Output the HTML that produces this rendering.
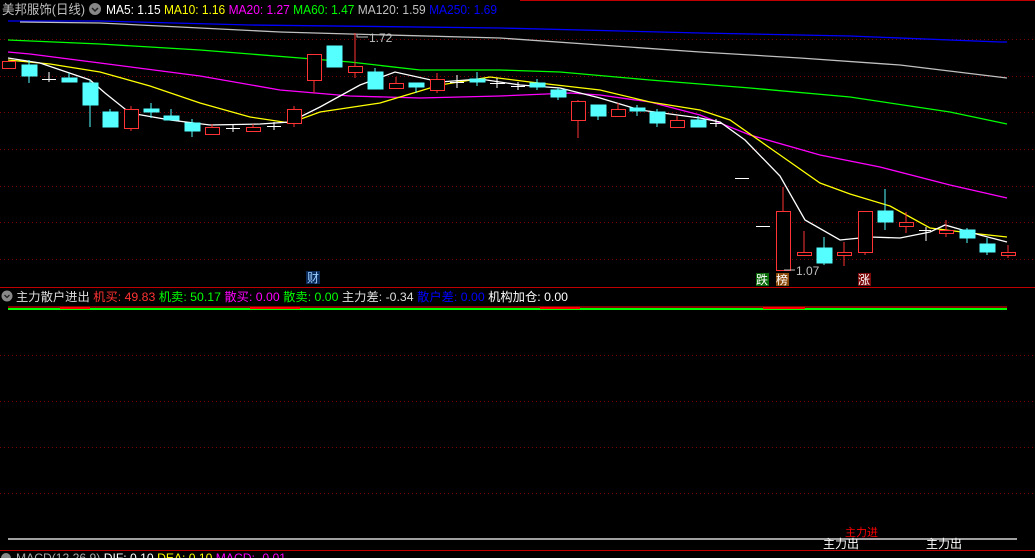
<!DOCTYPE html>
<html><head><meta charset="utf-8"><style>
html,body{margin:0;padding:0;background:#000;width:1035px;height:558px;overflow:hidden}
svg{display:block}
text{font-family:"Liberation Sans","Noto Sans CJK SC",sans-serif}
</style></head><body>
<svg width="1035" height="558" viewBox="0 0 1035 558">
<rect width="1035" height="558" fill="#000"/>
<line x1="520" y1="0.5" x2="1035" y2="0.5" stroke="#c00000"/>
<g stroke="#800000" stroke-dasharray="1,3">
<line x1="0" y1="39.5" x2="1035" y2="39.5"/><line x1="0" y1="76.5" x2="1035" y2="76.5"/>
<line x1="0" y1="112.5" x2="1035" y2="112.5"/><line x1="0" y1="149.5" x2="1035" y2="149.5"/>
<line x1="0" y1="186.5" x2="1035" y2="186.5"/><line x1="0" y1="222.5" x2="1035" y2="222.5"/>
<line x1="0" y1="259.5" x2="1035" y2="259.5"/>
<line x1="0" y1="355.5" x2="1035" y2="355.5"/><line x1="0" y1="401.5" x2="1035" y2="401.5"/>
<line x1="0" y1="447.5" x2="1035" y2="447.5"/><line x1="0" y1="493.5" x2="1035" y2="493.5"/>
</g>
<g fill="none" stroke-width="1.3">
<polyline stroke="#0000ff" points="8,21 100,21 250,25 500,28 700,33 850,36 1000,42 1007,42"/>
<polyline stroke="#c0c0c0" points="20,22 100,23 200,28 280,32 350,34 500,38 600,45 700,52 800,58 900,65 1007,78"/>
<polyline stroke="#00ff00" points="8,40 100,44 200,50 300,58 350,62 420,70 500,70 560,72 650,80 750,88 850,97 950,112 1007,124"/>
<polyline stroke="#ff00ff" points="8,52 30,54 100,63 200,76 280,90 350,96 420,98 500,96 570,93 600,95 650,102 700,115 750,135 820,155 880,167 950,185 1007,198"/>
<polyline stroke="#ffff00" points="8,60 50,64 100,72 150,86 200,103 250,117 290,123 320,112 380,103 440,85 490,77 530,82 600,90 650,102 700,110 730,120 780,155 820,183 850,194 890,206 930,228 970,233 1007,237"/>
<polyline stroke="#ffffff" points="8,58 40,63 90,80 105,93 130,113 170,120 210,125 260,124 290,122 320,107 360,85 395,72 440,82 480,79 520,85 560,88 600,98 640,110 700,118 720,122 745,140 780,176 805,220 840,240 870,237 900,238 930,232 945,225 980,235 1007,242"/>
</g>
<g stroke="#ff3333" fill="#000" stroke-width="1">
<rect x="2.5" y="61.5" width="13" height="7"/>
<line x1="131" y1="106" x2="131" y2="131"/><rect x="124.5" y="109.5" width="14" height="19"/>
<line x1="212" y1="124" x2="212" y2="127"/><rect x="205.5" y="127.5" width="14" height="7"/>
<line x1="253" y1="124" x2="253" y2="127"/><rect x="246.5" y="127.5" width="14" height="4"/>
<line x1="294" y1="106" x2="294" y2="127"/><rect x="287.5" y="109.5" width="14" height="14"/>
<line x1="314" y1="80" x2="314" y2="93"/><rect x="307.5" y="54.5" width="14" height="26"/>
<line x1="355" y1="33" x2="355" y2="78"/><rect x="348.5" y="66.5" width="14" height="6"/>
<line x1="396" y1="77" x2="396" y2="89"/><rect x="389.5" y="83.5" width="14" height="5"/>
<line x1="437" y1="73" x2="437" y2="93"/><rect x="430.5" y="79.5" width="14" height="11"/>
<line x1="578" y1="100" x2="578" y2="138"/><rect x="571.5" y="101.5" width="14" height="19"/>
<line x1="618" y1="103" x2="618" y2="109"/><rect x="611.5" y="109.5" width="14" height="7"/>
<line x1="677" y1="116" x2="677" y2="120"/><rect x="670.5" y="120.5" width="14" height="7"/>
<line x1="783" y1="187" x2="783" y2="211"/><rect x="776.5" y="211.5" width="14" height="59"/>
<line x1="804" y1="231" x2="804" y2="252"/><rect x="797.5" y="252.5" width="14" height="3"/>
<line x1="844" y1="242" x2="844" y2="266"/><rect x="837.5" y="252.5" width="14" height="3"/>
<line x1="865" y1="252" x2="865" y2="255"/><rect x="858.5" y="211.5" width="14" height="41"/>
<line x1="906" y1="212" x2="906" y2="233"/><rect x="899.5" y="222.5" width="14" height="4"/>
<line x1="946" y1="220" x2="946" y2="237"/><rect x="939.5" y="230.5" width="14" height="3"/>
<line x1="1008" y1="245" x2="1008" y2="258"/><rect x="1001.5" y="252.5" width="14" height="3"/>
</g>
<g stroke="#55ffff" fill="#55ffff">
<line x1="29" y1="60" x2="29" y2="83"/><rect x="22" y="65" width="15" height="11"/>
<line x1="69" y1="73" x2="69" y2="82"/><rect x="62" y="78" width="15" height="4"/>
<line x1="90" y1="80" x2="90" y2="127"/><rect x="83" y="83" width="15" height="22"/>
<line x1="110" y1="109" x2="110" y2="127"/><rect x="103" y="112" width="15" height="15"/>
<line x1="151" y1="103" x2="151" y2="118"/><rect x="144" y="109" width="15" height="3"/>
<line x1="171" y1="109" x2="171" y2="120"/><rect x="164" y="116" width="15" height="4"/>
<line x1="192" y1="119" x2="192" y2="137"/><rect x="185" y="123" width="15" height="8"/>
<rect x="327" y="46" width="15" height="21"/>
<line x1="375" y1="68" x2="375" y2="89"/><rect x="368" y="72" width="15" height="17"/>
<line x1="416" y1="83" x2="416" y2="93"/><rect x="409" y="83" width="15" height="4"/>
<line x1="477" y1="72" x2="477" y2="86"/><rect x="470" y="79" width="15" height="3"/>
<line x1="537" y1="79" x2="537" y2="90"/><rect x="530" y="83" width="15" height="4"/>
<line x1="558" y1="88" x2="558" y2="100"/><rect x="551" y="90" width="15" height="7"/>
<line x1="598" y1="105" x2="598" y2="120"/><rect x="591" y="105" width="15" height="11"/>
<line x1="637" y1="105" x2="637" y2="116"/><rect x="630" y="108" width="15" height="3"/>
<line x1="657" y1="109" x2="657" y2="127"/><rect x="650" y="112" width="15" height="11"/>
<line x1="698" y1="116" x2="698" y2="127"/><rect x="691" y="120" width="15" height="7"/>
<line x1="824" y1="237" x2="824" y2="265"/><rect x="817" y="248" width="15" height="15"/>
<line x1="885" y1="189" x2="885" y2="230"/><rect x="878" y="211" width="15" height="11"/>
<line x1="967" y1="228" x2="967" y2="243"/><rect x="960" y="230" width="15" height="8"/>
<line x1="987" y1="238" x2="987" y2="255"/><rect x="980" y="244" width="15" height="8"/>
</g>
<g stroke="#fff">
<line x1="42" y1="79.5" x2="56" y2="79.5"/><line x1="49" y1="72" x2="49" y2="82"/>
<line x1="226" y1="128.5" x2="240" y2="128.5"/><line x1="233" y1="124" x2="233" y2="132"/>
<line x1="267" y1="126.5" x2="281" y2="126.5"/><line x1="274" y1="122" x2="274" y2="130"/>
<line x1="450" y1="82.5" x2="464" y2="82.5"/><line x1="457" y1="75" x2="457" y2="88"/>
<line x1="490" y1="83.5" x2="505" y2="83.5"/><line x1="497" y1="78" x2="497" y2="88"/>
<line x1="511" y1="86.5" x2="525" y2="86.5"/><line x1="518" y1="82" x2="518" y2="90"/>
<line x1="710" y1="123.5" x2="722" y2="123.5"/><line x1="716" y1="119" x2="716" y2="127"/>
<line x1="735" y1="178.5" x2="749" y2="178.5"/>
<line x1="756" y1="226.5" x2="770" y2="226.5"/>
<line x1="919" y1="230.5" x2="931" y2="230.5"/><line x1="926" y1="227" x2="926" y2="241"/>
</g>
<g stroke="#c0c0c0"><polyline fill="none" points="357,35 357,37 368,37"/><polyline fill="none" points="784,270 784,270 795,270"/></g>
<text x="369" y="42" fill="#c0c0c0" font-size="12">1.72</text>
<text x="796" y="275" fill="#c0c0c0" font-size="12">1.07</text>
<rect x="306" y="271" width="14" height="13" fill="#0a2a5a"/><text x="307" y="282" fill="#9cf" font-size="12">财</text>
<rect x="756" y="273" width="13" height="13" fill="#0a6a0a"/><text x="756" y="284" fill="#fff" font-size="12">跌</text>
<rect x="776" y="273" width="13" height="13" fill="#8a4a0a"/><text x="776" y="284" fill="#fff" font-size="12">榜</text>
<rect x="858" y="273" width="13" height="13" fill="#7a0a0a"/><text x="858" y="284" fill="#fff" font-size="12">涨</text>
<text x="2" y="14" fill="#c0c0c0" font-size="13" textLength="83" lengthAdjust="spacingAndGlyphs">美邦服饰(日线)</text>
<circle cx="95" cy="9" r="6" fill="#888"/><path d="M92 8 l3 3 l3 -3" stroke="#222" stroke-width="1.5" fill="none"/>
<text x="106" y="14" font-size="13" textLength="391" lengthAdjust="spacingAndGlyphs"><tspan fill="#fff">MA5: 1.15</tspan> <tspan fill="#ff0">MA10: 1.16</tspan> <tspan fill="#f0f">MA20: 1.27</tspan> <tspan fill="#0f0">MA60: 1.47</tspan> <tspan fill="#c0c0c0">MA120: 1.59</tspan> <tspan fill="#00f">MA250: 1.69</tspan></text>
<line x1="0" y1="287.5" x2="1035" y2="287.5" stroke="#c00000"/>
<circle cx="7" cy="296" r="5.5" fill="#888"/><path d="M4.5 295 l2.5 2.5 l2.5 -2.5" stroke="#222" stroke-width="1.3" fill="none"/>
<text x="16" y="301" font-size="12" textLength="552" lengthAdjust="spacingAndGlyphs"><tspan fill="#ddd">主力散户进出</tspan> <tspan fill="#f33">机买: 49.83</tspan> <tspan fill="#0f0">机卖: 50.17</tspan> <tspan fill="#f0f">散买: 0.00</tspan> <tspan fill="#0f0">散卖: 0.00</tspan> <tspan fill="#ddd">主力差: -0.34</tspan> <tspan fill="#00f">散户差: 0.00</tspan> <tspan fill="#fff">机构加仓: 0.00</tspan></text>
<line x1="8" y1="307" x2="1007" y2="307" stroke="#f00"/>
<line x1="8" y1="309" x2="1007" y2="309" stroke="#0f0" stroke-width="2"/>
<g stroke="#f00" stroke-width="2"><line x1="60" y1="308" x2="90" y2="308"/><line x1="250" y1="308" x2="300" y2="308"/><line x1="763" y1="308" x2="805" y2="308"/><line x1="540" y1="308" x2="580" y2="308"/></g>
<line x1="8" y1="539" x2="1017" y2="539" stroke="#fff" stroke-width="1.3"/>
<text x="845" y="536" fill="#f00" font-size="11">主力进</text>
<text x="823" y="548" fill="#fff" font-size="12">主力出</text>
<text x="926" y="548" fill="#fff" font-size="12">主力出</text>
<line x1="0" y1="550.5" x2="1035" y2="550.5" stroke="#c00000"/>
<circle cx="6" cy="558" r="5" fill="#888"/>
<text x="16" y="562" font-size="12" textLength="270" lengthAdjust="spacingAndGlyphs"><tspan fill="#aaa">MACD(12,26,9)</tspan> <tspan fill="#fff">DIF: 0.10</tspan> <tspan fill="#ff0">DEA: 0.10</tspan> <tspan fill="#f0f">MACD: -0.01</tspan></text>
</svg>
</body></html>
